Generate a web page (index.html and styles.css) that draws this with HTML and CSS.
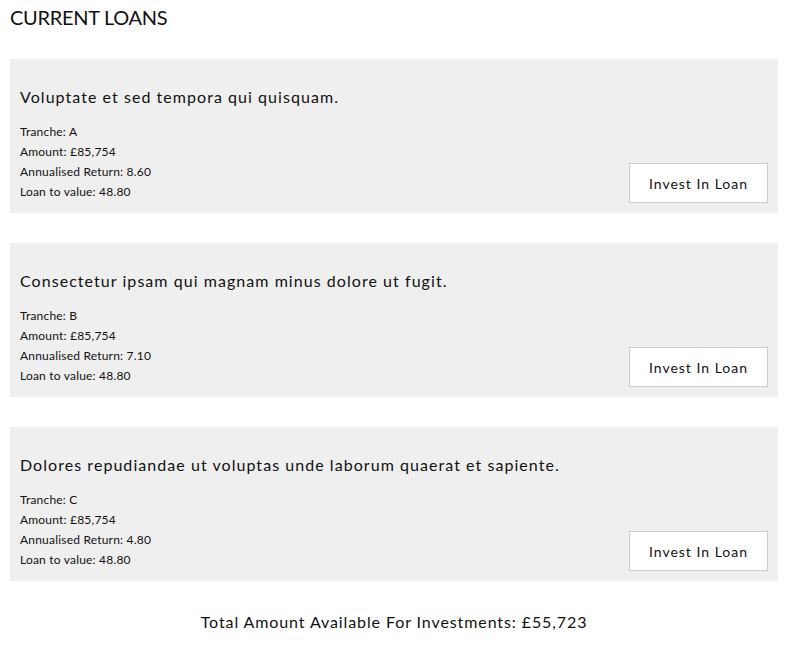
FILE: index.html
```html
<!DOCTYPE html>
<html>
<head>
<meta charset="utf-8">
<link rel="stylesheet" href="styles.css">
</head>
<body>
<div class="page">
  <h1 class="title">CURRENT LOANS</h1>
  <div class="loans">
    <div class="card">
      <div class="info">
        <h2 class="name">Voluptate et sed tempora qui quisquam.</h2>
        <div class="details">
          <div>Tranche: A</div>
          <div>Amount: £85,754</div>
          <div>Annualised Return: 8.60</div>
          <div>Loan to value: 48.80</div>
        </div>
      </div>
      <button class="invest">Invest In Loan</button>
    </div>
    <div class="card">
      <div class="info">
        <h2 class="name">Consectetur ipsam qui magnam minus dolore ut fugit.</h2>
        <div class="details">
          <div>Tranche: B</div>
          <div>Amount: £85,754</div>
          <div>Annualised Return: 7.10</div>
          <div>Loan to value: 48.80</div>
        </div>
      </div>
      <button class="invest">Invest In Loan</button>
    </div>
    <div class="card">
      <div class="info">
        <h2 class="name">Dolores repudiandae ut voluptas unde laborum quaerat et sapiente.</h2>
        <div class="details">
          <div>Tranche: C</div>
          <div>Amount: £85,754</div>
          <div>Annualised Return: 4.80</div>
          <div>Loan to value: 48.80</div>
        </div>
      </div>
      <button class="invest">Invest In Loan</button>
    </div>
  </div>
  <p class="total">Total Amount Available For Investments: £55,723</p>
</div>
</body>
</html>
```
FILE: styles.css
```css
* { box-sizing: border-box; }
body {
  margin: 0;
  background: #fff;
  color: #111;
  font-family: "Lato", "Liberation Sans", sans-serif;
}
.page {
  padding: 5px 11px 0 10px;
}
.title {
  margin: 0 0 30px 0;
  font-size: 20px;
  line-height: 24px;
  font-weight: 400;
  letter-spacing: -0.3px;
}
.loans {
  display: flex;
  flex-direction: column;
  gap: 30px;
}
.card {
  background: #efefef;
  height: 154px;
  padding: 28px 10px 10px 10px;
  display: flex;
  justify-content: space-between;
  align-items: flex-end;
}
.info {
  align-self: stretch;
}
.name {
  margin: 0 0 15px 0;
  font-size: 16px;
  line-height: 19px;
  font-weight: 400;
  letter-spacing: 1.05px;
}
.details {
  font-size: 12px;
  line-height: 20px;
  letter-spacing: 0.2px;
  padding-top: 1px;
}
.invest {
  width: 139px;
  height: 40px;
  background: #fff;
  border: 1px solid #cccccc;
  font-family: inherit;
  font-size: 14px;
  letter-spacing: 1px;
  color: #111;
  padding: 0;
}
.total {
  margin: 31px 0 0 0;
  text-align: center;
  font-size: 16px;
  line-height: 20px;
  letter-spacing: 0.9px;
}
```
